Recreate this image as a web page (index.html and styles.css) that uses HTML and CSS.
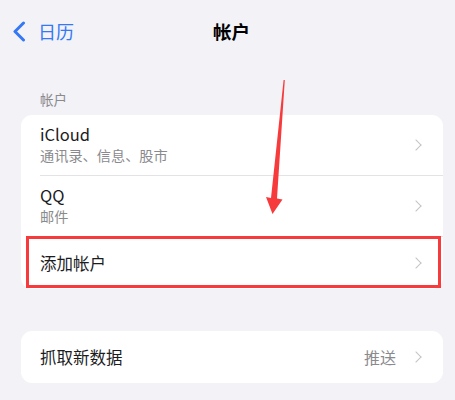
FILE: index.html
```html
<!DOCTYPE html>
<html>
<head>
  <title>帐户</title>
  <link rel="stylesheet" href="styles.css">
</head>
<body>
  <div class="nav">
    <div class="back">
      <svg width="14" height="21" viewBox="0 0 14 21"><path d="M11.5 2 L3 10.5 L11.5 19" fill="none" stroke="#3478f6" stroke-width="3" stroke-linecap="round" stroke-linejoin="round"/></svg>
      <span>日历</span>
    </div>
    <div class="nav-title">帐户</div>
  </div>

  <div class="section-label">帐户</div>
  <div class="card">
    <div class="row tall">
      <div class="row-text">
        <div class="row-title">iCloud</div>
        <div class="row-sub">通讯录、信息、股市</div>
      </div>
      <span class="chevron"></span>
    </div>
    <div class="row tall">
      <div class="row-text">
        <div class="row-title">QQ</div>
        <div class="row-sub">邮件</div>
      </div>
      <span class="chevron"></span>
    </div>
    <div class="row marked">
      <div class="row-title">添加帐户</div>
      <span class="chevron"></span>
    </div>
  </div>

  <div class="card second">
    <div class="row">
      <div class="row-title">抓取新数据</div>
      <span class="row-value">推送</span>
      <span class="chevron"></span>
    </div>
  </div>

  <svg class="arrow" width="455" height="400" viewBox="0 0 455 400">
    <polygon points="283.6,80 284.8,80 277,198.5 282.5,199.5 272.5,214 266,197 271,198" fill="#f73b3d"/>
  </svg>
</body>
</html>
```

FILE: styles.css
```css
body {
  margin: 0;
  background: #f2f2f7;
  font-family: "Noto Sans CJK SC", "Noto Sans", sans-serif;
  color: #1c1c1e;
  position: relative;
  height: 400px;
  overflow: hidden;
}

.nav {
  height: 62px;
  display: flex;
  align-items: center;
  justify-content: center;
  position: relative;
}
.back {
  position: absolute;
  left: 12px;
  top: 21px;
  display: flex;
  align-items: center;
  gap: 12px;
  color: #3478f6;
  font-size: 18px;
  line-height: 21px;
}
.nav-title {
  font-size: 18.5px;
  font-weight: bold;
  color: #000;
  margin-left: 8px;
}

.section-label {
  margin: 28px 0 7px 40px;
  font-size: 13.5px;
  line-height: 18px;
  color: #8a8a8e;
}

.card {
  margin: 0 12px 0 21px;
  background: #fff;
  border-radius: 11px;
  position: relative;
}
.card.second {
  margin-top: 42px;
}

.row {
  display: flex;
  align-items: center;
  height: 52px;
  padding: 0 20px 0 19px;
  position: relative;
}
.row.tall {
  height: 61px;
  box-sizing: border-box;
  border-bottom: 1px solid #e3e3e6;
  margin-left: 19px;
  padding-left: 0;
}
.row-text {
  flex: 1;
}
.row-title {
  flex: 1;
  font-size: 16.5px;
  line-height: 21px;
}
.row-sub {
  font-size: 14.2px;
  line-height: 21px;
  color: #8a8a8e;
}
.row-value {
  font-size: 16px;
  color: #8a8a8e;
  margin-right: 16px;
}
.chevron {
  width: 7px;
  height: 7px;
  border-top: 1.8px solid #c4c4c7;
  border-right: 1.8px solid #c4c4c7;
  transform: rotate(45deg);
  margin-right: 3px;
}

.marked::after {
  content: "";
  position: absolute;
  top: -1px;
  bottom: 1px;
  left: 5px;
  right: 2px;
  border: 3px solid #f73b3d;
}

.arrow {
  position: absolute;
  left: 0;
  top: 0;
  pointer-events: none;
}
```
